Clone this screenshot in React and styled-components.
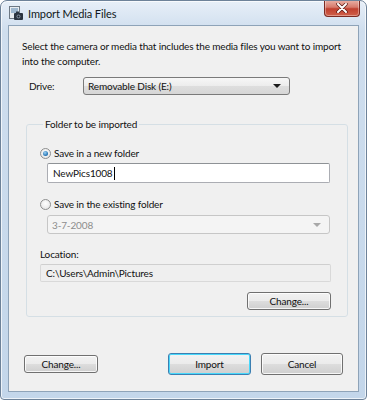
import React from "react"
import styled, { createGlobalStyle } from "styled-components"

const GlobalStyle = createGlobalStyle`
  html, body {
    margin: 0;
    padding: 0;
    background: #ffffff;
  }
  body {
    font-family: Lato, "Open Sans", sans-serif;
    font-size: 10px;
    letter-spacing: -0.15px;
    color: #111111;
  }
`

const Window = styled.div`
  width: 367px;
  height: 400px;
  box-sizing: border-box;
  display: flex;
  flex-direction: column;
  border: 1px solid #6d8299;
  border-radius: 7px 7px 4px 4px;
  background: linear-gradient(180deg, #e7eff8 0%, #cfdeee 30px, #c3d6ea 100%);
  box-shadow: inset 0 0 0 1px rgba(255, 255, 255, 0.7);
  overflow: hidden;
`

const TitleBar = styled.div`
  height: 24px;
  display: flex;
  align-items: center;
  padding: 0 6px 0 7px;
  position: relative;
  .title {
    margin-left: 4px;
    font-size: 11px;
    letter-spacing: -0.1px;
    color: #101820;
  }
`

const CloseButton = styled.div`
  position: absolute;
  top: -1px;
  right: 6px;
  width: 36px;
  height: 17px;
  box-sizing: border-box;
  border: 1px solid #7c2a22;
  border-top: none;
  border-radius: 0 0 4px 4px;
  background: linear-gradient(180deg, #eab3a8 0%, #d77a6c 45%, #c0402f 55%, #d0604a 100%);
  box-shadow: inset 0 0 0 1px rgba(255, 255, 255, 0.35);
  display: flex;
  align-items: center;
  justify-content: center;
`

const Panel = styled.div`
  flex: 1;
  margin: 0 7px 7px 7px;
  border: 1px solid #8ea3b8;
  background: #f0f0f0;
  display: flex;
  flex-direction: column;
  padding: 13px 0 0 0;
`

const Intro = styled.p`
  margin: 0 0 0 13px;
  width: 330px;
  line-height: 15px;
`

const DriveRow = styled.div`
  display: flex;
  align-items: center;
  margin: 8px 0 0 20px;
  .label {
    width: 54px;
  }
`

const ComboBox = styled.div`
  box-sizing: border-box;
  width: ${(p) => p.width}px;
  height: ${(p) => p.height || 18}px;
  display: flex;
  align-items: center;
  justify-content: space-between;
  padding: 0 8px 0 4px;
  border: 1px solid ${(p) => (p.disabled ? "#c6c6c6" : "#7a7a7a")};
  border-radius: 3px;
  background: ${(p) =>
    p.disabled
      ? "#f4f4f4"
      : "linear-gradient(180deg, #f7f7f7 0%, #ececec 50%, #dedede 51%, #d6d6d6 100%)"};
  color: ${(p) => (p.disabled ? "#8d8d8d" : "#111111")};
  margin: ${(p) => p.margin || "0"};
`

const Arrow = styled.span`
  width: 0;
  height: 0;
  border-left: 4px solid transparent;
  border-right: 4px solid transparent;
  border-top: 4px solid ${(p) => (p.disabled ? "#a8a8a8" : "#1a1a1a")};
`

const Group = styled.fieldset`
  margin: 22px 0 0 17px;
  width: 321px;
  box-sizing: border-box;
  height: 200px;
  border: 1px solid #d5dfe5;
  border-radius: 3px;
  padding: 5px 16px 0 13px;
  legend {
    padding: 0 2px;
    margin-left: 3px;
    line-height: 14px;
  }
`

const RadioRow = styled.div`
  display: flex;
  align-items: center;
  margin-top: ${(p) => p.top}px;
  height: 14px;
`

const Radio = styled.span`
  width: 11px;
  height: 11px;
  box-sizing: border-box;
  border-radius: 50%;
  border: 1px solid #8e8f8f;
  background: radial-gradient(circle at 50% 40%, #ffffff 0%, #e0e0e0 100%);
  margin-right: 3px;
  display: flex;
  align-items: center;
  justify-content: center;
  &::after {
    content: "";
    display: ${(p) => (p.checked ? "block" : "none")};
    width: 5px;
    height: 5px;
    border-radius: 50%;
    background: radial-gradient(circle at 40% 35%, #9fd4f6 0%, #1f6fb0 70%, #124a7a 100%);
  }
`

const TextBox = styled.div`
  box-sizing: border-box;
  width: ${(p) => p.width}px;
  height: ${(p) => p.height}px;
  margin: ${(p) => p.margin || "0"};
  display: flex;
  align-items: center;
  padding-left: 5px;
  border: 1px solid ${(p) => (p.readOnly ? "#d9d9d9" : "#abadb3")};
  border-top-color: ${(p) => (p.readOnly ? "#cfcfcf" : "#8e9296")};
  border-radius: 2px;
  background: ${(p) => (p.readOnly ? "#efefef" : "#ffffff")};
  .caret {
    width: 1px;
    height: 13px;
    background: #000;
    margin-left: 1px;
  }
`

const Label = styled.div`
  margin-top: ${(p) => p.top}px;
  line-height: 14px;
`

const Button = styled.div`
  box-sizing: border-box;
  width: ${(p) => p.width}px;
  height: ${(p) => p.height || 18}px;
  display: flex;
  align-items: center;
  justify-content: center;
  border: 1px solid ${(p) => (p.primary ? "#3c7fb1" : "#707070")};
  border-radius: 3px;
  background: linear-gradient(180deg, #f2f2f2 0%, #ebebeb 50%, #dddddd 51%, #cfcfcf 100%);
  box-shadow: inset 0 0 0 1px ${(p) => (p.primary ? "#48d8fb" : "rgba(255,255,255,0.8)")};
  color: #111111;
`

const ButtonRow = styled.div`
  display: flex;
  justify-content: flex-end;
  margin: ${(p) => p.margin};
`

const Footer = styled.div`
  display: flex;
  align-items: center;
  margin: 36px 0 0 15px;
  .spacer {
    flex: 1;
  }
  .right {
    display: flex;
    gap: 10px;
    margin-right: 15px;
  }
`

const TitleIcon = () => (
  <svg width="16" height="16" viewBox="0 0 16 16">
    <rect x="1.5" y="1.5" width="10" height="12" fill="#e8ecf0" stroke="#6c7884" />
    <rect x="3" y="3" width="7" height="5" fill="#9fb8cf" />
    <rect x="6" y="8" width="9" height="7" rx="1" fill="#2b3440" />
    <rect x="8" y="6.5" width="3" height="2" fill="#2b3440" />
    <circle cx="10.5" cy="11.5" r="2" fill="#7c8a99" />
    <circle cx="10.5" cy="11.5" r="1" fill="#1a2028" />
  </svg>
)

const CloseGlyph = () => (
  <svg width="12" height="10" viewBox="0 0 12 10">
    <path d="M2 1 L10 9 M10 1 L2 9" stroke="#5a1a14" strokeWidth="3.4" strokeLinecap="round" />
    <path d="M2 1 L10 9 M10 1 L2 9" stroke="#ffffff" strokeWidth="2" strokeLinecap="round" />
  </svg>
)

const App = () => {
  return (
    <>
      <GlobalStyle />
      <Window>
        <TitleBar>
          <TitleIcon />
          <span className="title">Import Media Files</span>
          <CloseButton>
            <CloseGlyph />
          </CloseButton>
        </TitleBar>
        <Panel>
          <Intro>
            Select the camera or media that includes the media files you want to import into the
            computer.
          </Intro>
          <DriveRow>
            <span className="label">Drive:</span>
            <ComboBox width={207}>
              <span>Removable Disk (E:)</span>
              <Arrow />
            </ComboBox>
          </DriveRow>
          <Group>
            <legend>Folder to be imported</legend>
            <RadioRow top={10}>
              <Radio checked />
              <span>Save in a new folder</span>
            </RadioRow>
            <TextBox width={283} height={20} margin="3px 0 0 7px">
              <span>NewPics1008</span>
              <span className="caret" />
            </TextBox>
            <RadioRow top={14}>
              <Radio />
              <span>Save in the existing folder</span>
            </RadioRow>
            <ComboBox width={283} height={19} margin="4px 0 0 7px" disabled>
              <span>3-7-2008</span>
              <Arrow disabled />
            </ComboBox>
            <Label top={13}>Location:</Label>
            <TextBox width={291} height={18} margin="3px 0 0 0" readOnly>
              <span>C:\Users\Admin\Pictures</span>
            </TextBox>
            <ButtonRow margin="10px 0 0 0">
              <Button width={84}>Change...</Button>
            </ButtonRow>
          </Group>
          <Footer>
            <Button width={74}>Change...</Button>
            <div className="spacer" />
            <div className="right">
              <Button width={83} height={22} primary>
                Import
              </Button>
              <Button width={82} height={22}>
                Cancel
              </Button>
            </div>
          </Footer>
        </Panel>
      </Window>
    </>
  )
}

export default App
